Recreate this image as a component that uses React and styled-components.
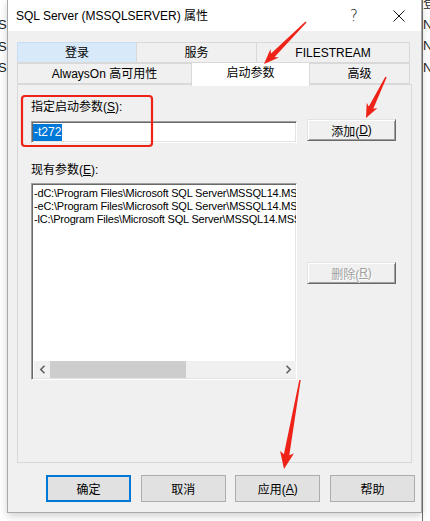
import React from 'react';
import styled, { createGlobalStyle } from 'styled-components';

const Global = createGlobalStyle`
  html, body { margin: 0; padding: 0; background: #fff; }
  body {
    font-family: "Liberation Sans", "Noto Sans CJK SC", sans-serif;
    font-size: 12px;
    color: #000;
  }
  * { box-sizing: border-box; }
`;

const Page = styled.div`
  position: relative;
  width: 430px;
  height: 521px;
  overflow: hidden;
  display: flex;
  align-items: flex-start;
  background: #fff;
`;

const Strip = styled.div`
  flex: none;
  width: ${p => p.$w}px;
  height: 100%;
  overflow: hidden;
  display: flex;
  flex-direction: column;
  padding-top: ${p => p.$top}px;
  border-left: ${p => (p.$line ? '1px solid #6a6a6a' : 'none')};
  font-size: 13px;
  line-height: 21.5px;
  color: #1a1a1a;
  white-space: nowrap;
`;

const StripText = styled.span`
  display: block;
  margin-left: ${p => p.$shift || 0}px;
`;

const Dialog = styled.div`
  flex: none;
  width: 415px;
  height: 513px;
  background: #f0f0f0;
  border: 1px solid #a8a8a8;
  border-top: none;
  box-shadow: 0 3px 8px rgba(0, 0, 0, 0.18);
  display: flex;
  flex-direction: column;
`;

const TitleBar = styled.div`
  height: 31px;
  background: #fff;
  display: flex;
  align-items: center;
`;

const Title = styled.div`
  flex: 1;
  padding-left: 8px;
  font-size: 12px;
  line-height: 16px;
`;

const CaptionButton = styled.div`
  width: ${p => p.$w}px;
  height: 31px;
  display: flex;
  align-items: center;
  justify-content: center;
  font-size: 15px;
  font-family: "DejaVu Sans", sans-serif;
  font-weight: 300;
  color: #111;
`;

const Content = styled.div`
  padding: 11px 9px 0 9px;
`;

const TabRow = styled.div`
  display: flex;
  align-items: flex-end;
  height: 21px;
  width: 395px;
  position: relative;
  z-index: ${p => p.$z};
`;

const Tab = styled.div`
  flex: none;
  width: ${p => p.$w}px;
  height: ${p => (p.$state === 'active' ? 24 : 21)}px;
  margin-left: -1px;
  margin-bottom: ${p => (p.$state === 'active' ? -2 : 0)}px;
  &:first-child { margin-left: 0; }
  display: flex;
  align-items: center;
  justify-content: center;
  padding-bottom: ${p => (p.$state === 'active' ? 3 : 0)}px;
  border: 1px solid ${p => (p.$state === 'hover' ? '#c7def2' : '#d9d9d9')};
  border-bottom: ${p => (p.$state === 'active' ? 'none' : '1px solid #d9d9d9')};
  background: ${p =>
    p.$state === 'active' ? '#fff' : p.$state === 'hover' ? '#d8eaf9' : '#f0f0f0'};
  position: relative;
  z-index: ${p => (p.$state === 'active' ? 2 : 1)};
  font-size: 12px;
  line-height: 14px;
  white-space: nowrap;
`;

const Panel = styled.div`
  width: 395px;
  height: 379px;
  border: 1px solid #d9d9d9;
  background: #f0f0f0;
  padding: 15px 0 0 13px;
  position: relative;
  z-index: 1;
`;

const Label = styled.div`
  height: 14px;
  line-height: 14px;
  font-size: 12px;
  margin-top: ${p => p.$mt || 0}px;
  white-space: nowrap;
`;

const U = styled.span`
  text-decoration: underline;
  text-underline-offset: 1px;
`;

const Row = styled.div`
  display: flex;
  align-items: flex-start;
  gap: 10px;
  margin-top: ${p => p.$mt}px;
`;

const sunken = `
  background: #fff;
  border-style: solid;
  border-width: 1px;
  border-color: #a0a0a0 #ffffff #ffffff #a0a0a0;
  box-shadow: inset 1px 1px 0 #696969, inset -1px -1px 0 #e3e3e3;
`;

const TextBox = styled.div`
  ${sunken}
  width: 266px;
  height: 22px;
  margin-top: 2px;
  padding: 1px 0 0 1px;
  display: flex;
  align-items: center;
`;

const Selected = styled.span`
  background: #0078d7;
  color: #fff;
  font-size: 12px;
  line-height: 17px;
  padding: 0 1px;
`;

const RaisedButton = styled.div`
  width: 89px;
  height: 22px;
  background: #f0f0f0;
  border-style: solid;
  border-width: 1px;
  border-color: #e3e3e3 #696969 #696969 #e3e3e3;
  box-shadow: inset 1px 1px 0 #fff, inset -1px -1px 0 #a0a0a0;
  display: flex;
  align-items: center;
  justify-content: center;
  font-size: 12px;
  color: ${p => (p.$disabled ? '#a0a0a0' : '#000')};
  text-shadow: ${p => (p.$disabled ? '1px 1px 0 #fff' : 'none')};
`;

const ListBox = styled.div`
  ${sunken}
  width: 266px;
  height: 197px;
  padding: 2px 0 1px 2px;
  display: flex;
  flex-direction: column;
`;

const Items = styled.div`
  flex: 1;
  overflow: hidden;
  padding-top: 1px;
`;

const Item = styled.div`
  font-size: 11px;
  line-height: 13px;
  white-space: nowrap;
  letter-spacing: -0.2px;
`;

const HScroll = styled.div`
  height: 17px;
  display: flex;
  background: #f0f0f0;
`;

const ScrollArrow = styled.div`
  width: 16px;
  height: 17px;
  display: flex;
  align-items: center;
  justify-content: center;
`;

const Track = styled.div`
  flex: 1;
  display: flex;
  align-items: stretch;
`;

const Thumb = styled.div`
  width: ${p => p.$w}px;
  background: #cdcdcd;
`;

const SideColumn = styled.div`
  padding-top: 79px;
`;

const Footer = styled.div`
  display: flex;
  justify-content: flex-end;
  gap: 9.67px;
  padding: 12px 6px 0 0;
`;

const DlgButton = styled.div`
  width: 85px;
  height: 27px;
  background: #e1e1e1;
  border: 1px solid ${p => (p.$primary ? '#0078d7' : '#adadad')};
  box-shadow: ${p => (p.$primary ? 'inset 0 0 0 1px #0078d7' : 'none')};
  display: flex;
  align-items: center;
  justify-content: center;
  font-size: 12px;
`;

const Overlay = styled.svg`
  position: absolute;
  left: 0;
  top: 0;
  z-index: 10;
  pointer-events: none;
`;

function arrowPoints(tx, ty, hx, hy, headLen, headW, tailW, neckW) {
  const dx = hx - tx;
  const dy = hy - ty;
  const L = Math.hypot(dx, dy);
  const ux = dx / L;
  const uy = dy / L;
  const px = -uy;
  const py = ux;
  const bx = hx - ux * headLen;
  const by = hy - uy * headLen;
  const nx = bx + ux * 2.5;
  const ny = by + uy * 2.5;
  const pts = [
    [tx + (px * tailW) / 2, ty + (py * tailW) / 2],
    [nx + (px * neckW) / 2, ny + (py * neckW) / 2],
    [bx + (px * headW) / 2, by + (py * headW) / 2],
    [hx, hy],
    [bx - (px * headW) / 2, by - (py * headW) / 2],
    [nx - (px * neckW) / 2, ny - (py * neckW) / 2],
    [tx - (px * tailW) / 2, ty - (py * tailW) / 2],
  ];
  return pts.map(p => p.map(v => v.toFixed(1)).join(',')).join(' ');
}

const Chevron = ({ dir }) => (
  <svg width="7" height="9" viewBox="0 0 7 9">
    <path
      d={dir === 'left' ? 'M5.5 0.8 L1.8 4.5 L5.5 8.2' : 'M1.5 0.8 L5.2 4.5 L1.5 8.2'}
      fill="none"
      stroke="#606060"
      strokeWidth="1.6"
    />
  </svg>
);

const CloseIcon = () => (
  <svg width="12" height="12" viewBox="0 0 12 12">
    <path d="M0.5 0.5 L11.5 11.5 M11.5 0.5 L0.5 11.5" stroke="#111" strokeWidth="1" />
  </svg>
);

const items = [
  '-dC:\\Program Files\\Microsoft SQL Server\\MSSQL14.MSSQLSERVER\\MSSQL\\DATA\\master.mdf',
  '-eC:\\Program Files\\Microsoft SQL Server\\MSSQL14.MSSQLSERVER\\MSSQL\\Log\\ERRORLOG',
  '-lC:\\Program Files\\Microsoft SQL Server\\MSSQL14.MSSQLSERVER\\MSSQL\\DATA\\mastlog.ldf',
];

export default function App() {
  const red = '#ef2219';
  return (
    <>
      <Global />
      <Page>
        <Strip $w={7} $top={14}>
          <StripText $shift={-2}>S</StripText>
          <StripText $shift={-2}>S</StripText>
          <StripText $shift={-2}>S</StripText>
        </Strip>
        <Dialog>
          <TitleBar>
            <Title>SQL Server (MSSQLSERVER) 属性</Title>
            <CaptionButton $w={46}>?</CaptionButton>
            <CaptionButton $w={44}>
              <CloseIcon />
            </CaptionButton>
          </TitleBar>
          <Content>
            <TabRow $z={1}>
              <Tab $w={120} $state="hover">登录</Tab>
              <Tab $w={121}>服务</Tab>
              <Tab $w={154}>FILESTREAM</Tab>
            </TabRow>
            <TabRow $z={2}>
              <Tab $w={175}>AlwaysOn 高可用性</Tab>
              <Tab $w={119} $state="active">启动参数</Tab>
              <Tab $w={101}>高级</Tab>
            </TabRow>
            <Panel>
              <Label>
                指定启动参数(<U>S</U>):
              </Label>
              <Row $mt={5}>
                <TextBox>
                  <Selected>-t272</Selected>
                </TextBox>
                <RaisedButton>
                  添加(<U>D</U>)
                </RaisedButton>
              </Row>
              <Label $mt={20}>
                现有参数(<U>E</U>):
              </Label>
              <Row $mt={6}>
                <ListBox>
                  <Items>
                    {items.map(t => (
                      <Item key={t}>{t}</Item>
                    ))}
                  </Items>
                  <HScroll>
                    <ScrollArrow>
                      <Chevron dir="left" />
                    </ScrollArrow>
                    <Track>
                      <Thumb $w={136} />
                    </Track>
                    <ScrollArrow>
                      <Chevron dir="right" />
                    </ScrollArrow>
                  </HScroll>
                </ListBox>
                <SideColumn>
                  <RaisedButton $disabled>
                    删除(<U>R</U>)
                  </RaisedButton>
                </SideColumn>
              </Row>
            </Panel>
          </Content>
          <Footer>
            <DlgButton $primary>确定</DlgButton>
            <DlgButton>取消</DlgButton>
            <DlgButton>
              应用(<U>A</U>)
            </DlgButton>
            <DlgButton>帮助</DlgButton>
          </Footer>
        </Dialog>
        <Strip $w={8} $top={0} $line>
          <StripText style={{ marginTop: -8 }}>登</StripText>
          <StripText>N</StripText>
          <StripText>N</StripText>
          <StripText>N</StripText>
        </Strip>
        <Overlay width="430" height="521" viewBox="0 0 430 521">
          <rect x="22" y="96" width="130" height="50" rx="3" fill="none" stroke={red} strokeWidth="2.2" />
          <polygon fill={red} points={arrowPoints(306, 22, 264, 64, 15, 12, 1.5, 5)} />
          <polygon fill={red} points={arrowPoints(386, 77, 366, 118, 14, 12, 1.5, 5)} />
          <polygon fill={red} points={arrowPoints(300, 380, 284, 469, 17, 14, 1.5, 5.5)} />
        </Overlay>
      </Page>
    </>
  );
}
